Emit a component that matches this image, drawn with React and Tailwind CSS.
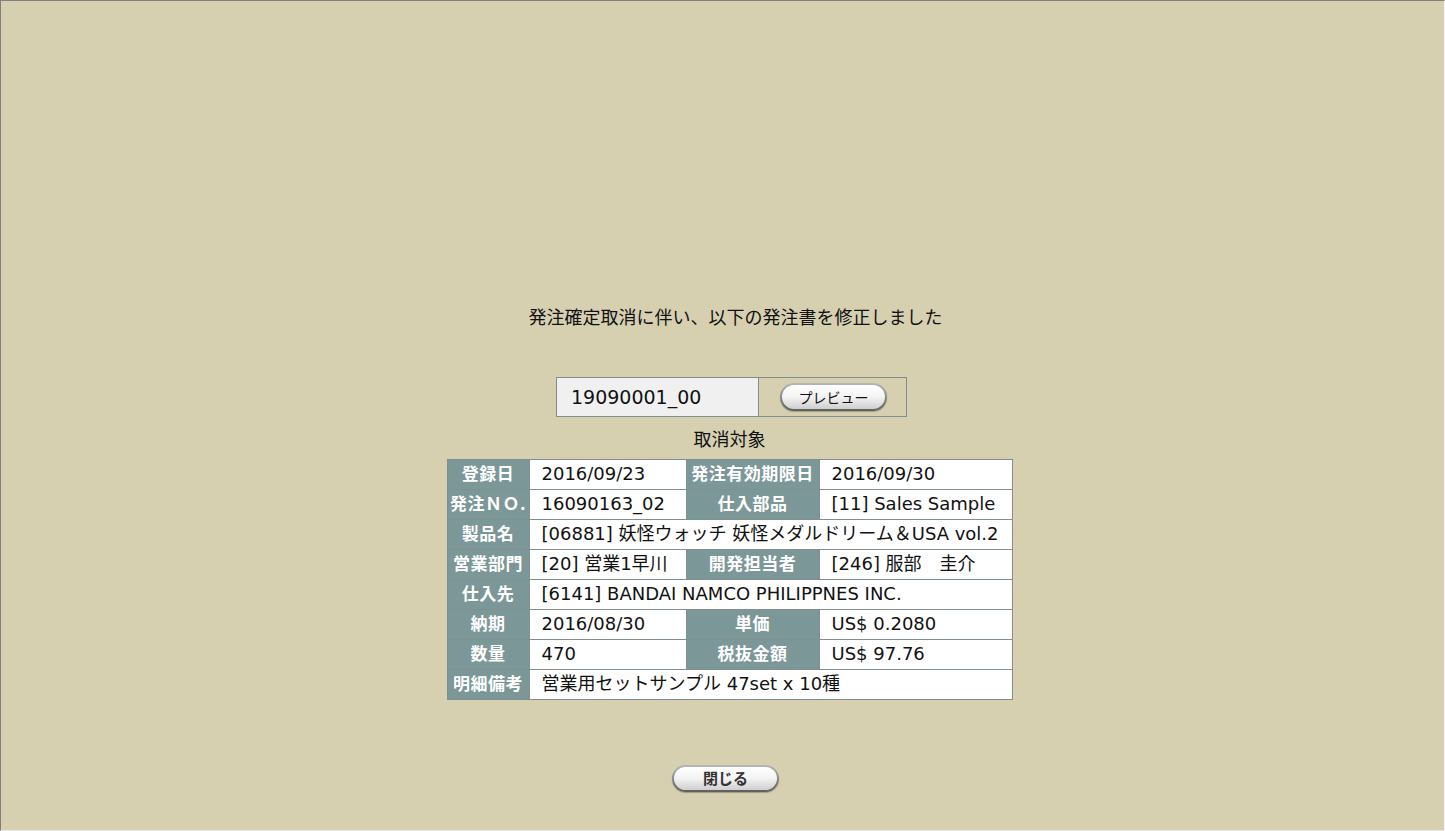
import React from "react";

const FONT = { fontFamily: '"DejaVu Sans", "Noto Sans CJK JP", sans-serif' };
const JP = { fontFamily: '"Noto Sans CJK JP", "DejaVu Sans", sans-serif' };

function Pill({ w, h, children, textClass }) {
  return (
    <span
      className={`inline-flex rounded-full p-[2px] bg-gradient-to-b from-[#b8b8b8] to-[#5e5e5e] shadow-[0_1px_1px_rgba(0,0,0,0.25)] ${w} ${h}`}
    >
      <span
        className={`flex flex-1 items-center justify-center rounded-full bg-gradient-to-b from-[#ffffff] via-[#f3f3f3] to-[#cfcfcf] ${textClass}`}
        style={JP}
      >
        {children}
      </span>
    </span>
  );
}

const L = "bg-[#7b9797] text-white font-bold text-[17px] leading-[20px] tracking-[0.5px] text-center align-middle border border-[#808f8f] whitespace-nowrap px-0 pb-[3px]";
const V = "bg-white text-[#111] text-[18px] leading-[20px] pl-[12px] pb-[1px] align-middle border border-[#808f8f] whitespace-nowrap";

export default function App() {
  return (
    <div
      className="h-[831px] w-full bg-[#d6d0b1] border-t border-l border-[#808080] border-r border-b border-r-[#f4f4f4] border-b-[#e8e8e8] overflow-hidden"
      style={FONT}
    >
      <div className="flex flex-col items-center pt-[302px]">
        <div className="ml-[26px] text-[18px] leading-[26px] text-[#111]" style={JP}>
          発注確定取消に伴い、以下の発注書を修正しました
        </div>

        <div className="ml-[18px] mt-[48px] flex h-[40px] w-[351px] border border-[#7f8f8f]">
          <div className="flex w-[202px] items-center bg-[#f0f0f0] pl-[14px] text-[19px] text-[#111] border-r border-[#7f8f8f]">
            19090001_00
          </div>
          <div className="flex flex-1 items-center pl-[21px]">
            <Pill w="w-[107px]" h="h-[28px]" textClass="text-[14px] text-[#111]">
              プレビュー
            </Pill>
          </div>
        </div>

        <div className="ml-[14px] mt-[8px] text-[18px] leading-[26px] text-[#111]" style={JP}>
          取消対象
        </div>

        <table className="ml-[14px] mt-[8px] border-collapse border border-[#7f8f8f]">
          <colgroup>
            <col className="w-[82px]" />
            <col className="w-[157px]" />
            <col className="w-[133px]" />
            <col className="w-[193px]" />
          </colgroup>
          <tbody>
            <tr className="h-[30px]">
              <td className={L} style={JP}>登録日</td>
              <td className={V}>2016/09/23</td>
              <td className={L} style={JP}>発注有効期限日</td>
              <td className={V}>2016/09/30</td>
            </tr>
            <tr className="h-[30px]">
              <td className={L} style={JP}>発注ＮＯ.</td>
              <td className={V}>16090163_02</td>
              <td className={L} style={JP}>仕入部品</td>
              <td className={V}>[11] Sales Sample</td>
            </tr>
            <tr className="h-[30px]">
              <td className={L} style={JP}>製品名</td>
              <td className={V} colSpan={3}>[06881] 妖怪ウォッチ 妖怪メダルドリーム＆USA vol.2</td>
            </tr>
            <tr className="h-[30px]">
              <td className={L} style={JP}>営業部門</td>
              <td className={V}>[20] 営業1早川</td>
              <td className={L} style={JP}>開発担当者</td>
              <td className={V}>[246] 服部　圭介</td>
            </tr>
            <tr className="h-[30px]">
              <td className={L} style={JP}>仕入先</td>
              <td className={V} colSpan={3}>[6141] BANDAI NAMCO PHILIPPNES INC.</td>
            </tr>
            <tr className="h-[30px]">
              <td className={L} style={JP}>納期</td>
              <td className={V}>2016/08/30</td>
              <td className={L} style={JP}>単価</td>
              <td className={V}>US$ 0.2080</td>
            </tr>
            <tr className="h-[30px]">
              <td className={L} style={JP}>数量</td>
              <td className={V}>470</td>
              <td className={L} style={JP}>税抜金額</td>
              <td className={V}>US$ 97.76</td>
            </tr>
            <tr className="h-[30px]">
              <td className={L} style={JP}>明細備考</td>
              <td className={V} colSpan={3}>営業用セットサンプル 47set x 10種</td>
            </tr>
          </tbody>
        </table>

        <div className="ml-[6px] mt-[65px]">
          <Pill w="w-[107px]" h="h-[27px]" textClass="text-[15px] font-bold text-[#333]">
            閉じる
          </Pill>
        </div>
      </div>
    </div>
  );
}
